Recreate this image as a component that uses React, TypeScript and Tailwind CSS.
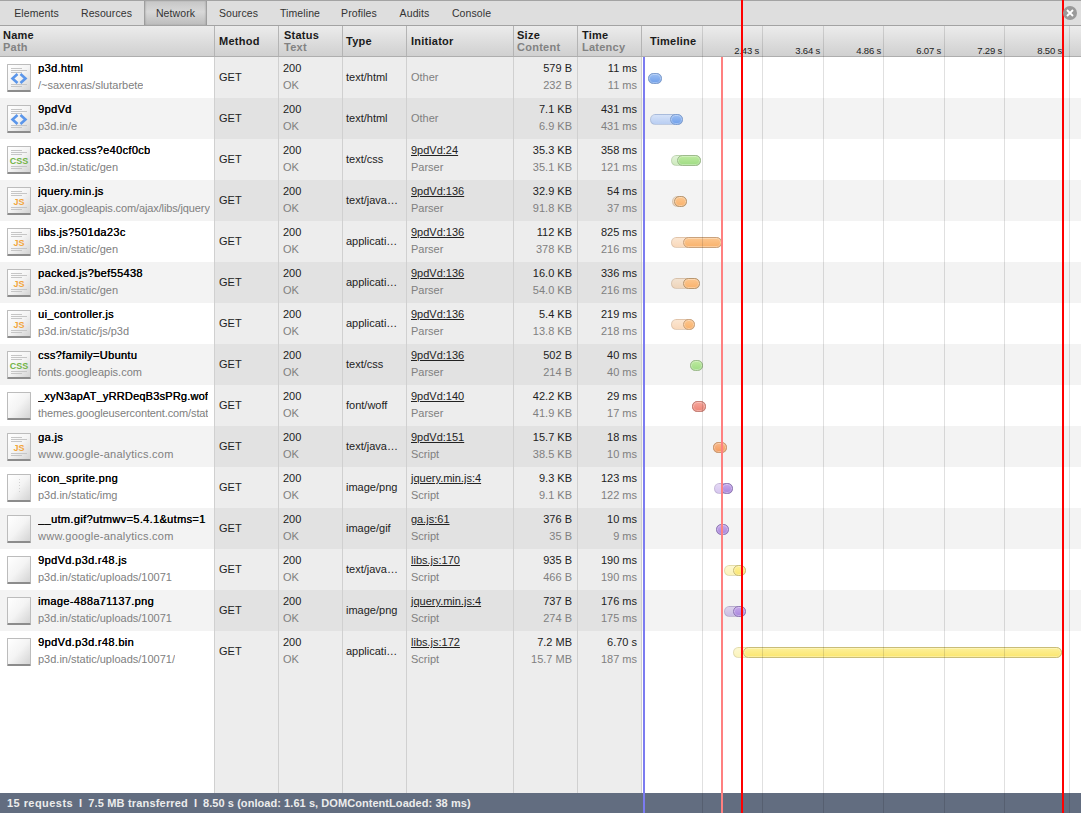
import React from 'react';

type Kind = 'html' | 'css' | 'js' | 'none' | 'dots';
type Bar = { start: number; mid: number; end: number; light: string; solid: string; edge: string };

const blue = { light: 'linear-gradient(#d5e2f8,#b9cef2)', solid: 'linear-gradient(#9dbff3,#6f9fea)', edge: '#7f9fd0' };
const green = { light: 'linear-gradient(#e2f3d8,#cdeabd)', solid: 'linear-gradient(#bdea9f,#9fdc84)', edge: '#9dbb8c' };
const orange = { light: 'linear-gradient(#fbe6d2,#f9d9bb)', solid: 'linear-gradient(#fcc68e,#f9b26c)', edge: '#c9a27c' };
const orangeDull = { light: 'linear-gradient(#f3e2d0,#eed5bb)', solid: 'linear-gradient(#fcc68e,#f9b26c)', edge: '#b8976f' };
const deep = { light: 'linear-gradient(#f7b98a,#f5a76d)', solid: 'linear-gradient(#f9b98a,#f39a5c)', edge: '#c99b75' };
const purple = { light: 'linear-gradient(#e5d9f5,#d6c6ef)', solid: 'linear-gradient(#c6a8ea,#a987dc)', edge: '#8f77b5' };
const purpleDull = { light: 'linear-gradient(#dcd2ec,#c9bde3)', solid: 'linear-gradient(#c6a8ea,#a987dc)', edge: '#8f77b5' };
const yellow = { light: 'linear-gradient(#fdf8d2,#fbf3bb)', solid: 'linear-gradient(#fdf09a,#fbe66f)', edge: '#c9bd78' };
const red = { light: 'linear-gradient(#f7a79c,#f08a7c)', solid: 'linear-gradient(#f7a79c,#ee8577)', edge: '#c4837a' };

const rows: {
  name: string; path: string; kind: Kind; type: string; init: string; cause: string;
  size: string; content: string; time: string; latency: string; bar: Bar;
}[] = [
  { name: 'p3d.html', path: '/~saxenras/slutarbete', kind: 'html', type: 'text/html', init: '', cause: 'Other', size: '579 B', content: '232 B', time: '11 ms', latency: '11 ms', bar: { start: 648, mid: 648, end: 662, ...blue } },
  { name: '9pdVd', path: 'p3d.in/e', kind: 'html', type: 'text/html', init: '', cause: 'Other', size: '7.1 KB', content: '6.9 KB', time: '431 ms', latency: '431 ms', bar: { start: 650, mid: 670, end: 683, ...blue } },
  { name: 'packed.css?e40cf0cb', path: 'p3d.in/static/gen', kind: 'css', type: 'text/css', init: '9pdVd:24', cause: 'Parser', size: '35.3 KB', content: '35.1 KB', time: '358 ms', latency: '121 ms', bar: { start: 671, mid: 677, end: 701, ...green } },
  { name: 'jquery.min.js', path: 'ajax.googleapis.com/ajax/libs/jquery', kind: 'js', type: 'text/java…', init: '9pdVd:136', cause: 'Parser', size: '32.9 KB', content: '91.8 KB', time: '54 ms', latency: '37 ms', bar: { start: 672, mid: 674, end: 687, ...orangeDull } },
  { name: 'libs.js?501da23c', path: 'p3d.in/static/gen', kind: 'js', type: 'applicati…', init: '9pdVd:136', cause: 'Parser', size: '112 KB', content: '378 KB', time: '825 ms', latency: '216 ms', bar: { start: 671, mid: 683, end: 722, ...orange } },
  { name: 'packed.js?bef55438', path: 'p3d.in/static/gen', kind: 'js', type: 'applicati…', init: '9pdVd:136', cause: 'Parser', size: '16.0 KB', content: '54.0 KB', time: '336 ms', latency: '216 ms', bar: { start: 671, mid: 683, end: 700, ...orangeDull } },
  { name: 'ui_controller.js', path: 'p3d.in/static/js/p3d', kind: 'js', type: 'applicati…', init: '9pdVd:136', cause: 'Parser', size: '5.4 KB', content: '13.8 KB', time: '219 ms', latency: '218 ms', bar: { start: 671, mid: 683, end: 695, ...orange } },
  { name: 'css?family=Ubuntu', path: 'fonts.googleapis.com', kind: 'css', type: 'text/css', init: '9pdVd:136', cause: 'Parser', size: '502 B', content: '214 B', time: '40 ms', latency: '40 ms', bar: { start: 690, mid: 690, end: 703, ...green } },
  { name: '_xyN3apAT_yRRDeqB3sPRg.wof', path: 'themes.googleusercontent.com/stat', kind: 'none', type: 'font/woff', init: '9pdVd:140', cause: 'Parser', size: '42.2 KB', content: '41.9 KB', time: '29 ms', latency: '17 ms', bar: { start: 692, mid: 692, end: 706, ...red } },
  { name: 'ga.js', path: 'www.google-analytics.com', kind: 'js', type: 'text/java…', init: '9pdVd:151', cause: 'Script', size: '15.7 KB', content: '38.5 KB', time: '18 ms', latency: '10 ms', bar: { start: 713, mid: 713, end: 727, ...deep } },
  { name: 'icon_sprite.png', path: 'p3d.in/static/img', kind: 'dots', type: 'image/png', init: 'jquery.min.js:4', cause: 'Script', size: '9.3 KB', content: '9.1 KB', time: '123 ms', latency: '122 ms', bar: { start: 714, mid: 721, end: 733, ...purple } },
  { name: '__utm.gif?utmwv=5.4.1&utms=1', path: 'www.google-analytics.com', kind: 'none', type: 'image/gif', init: 'ga.js:61', cause: 'Script', size: '376 B', content: '35 B', time: '10 ms', latency: '9 ms', bar: { start: 716, mid: 716, end: 729, ...purple } },
  { name: '9pdVd.p3d.r48.js', path: 'p3d.in/static/uploads/10071', kind: 'none', type: 'text/java…', init: 'libs.js:170', cause: 'Script', size: '935 B', content: '466 B', time: '190 ms', latency: '190 ms', bar: { start: 724, mid: 733, end: 746, ...yellow } },
  { name: 'image-488a71137.png', path: 'p3d.in/static/uploads/10071', kind: 'none', type: 'image/png', init: 'jquery.min.js:4', cause: 'Script', size: '737 B', content: '274 B', time: '176 ms', latency: '175 ms', bar: { start: 724, mid: 733, end: 746, ...purpleDull } },
  { name: '9pdVd.p3d.r48.bin', path: 'p3d.in/static/uploads/10071/', kind: 'none', type: 'applicati…', init: 'libs.js:172', cause: 'Script', size: '7.2 MB', content: '15.7 MB', time: '6.70 s', latency: '187 ms', bar: { start: 733, mid: 743, end: 1062, ...yellow } },
];

const tabs = [['Elements', 65], ['Resources', 75], ['Network', 63], ['Sources', 63], ['Timeline', 60], ['Profiles', 58], ['Audits', 53], ['Console', 61]] as const;
const gridX = [702, 762, 823, 883, 944, 1004, 1069];
const ticks = [['2.43 s', 759], ['3.64 s', 820], ['4.86 s', 881], ['6.07 s', 941], ['7.29 s', 1002], ['8.50 s', 1062]] as const;
const cols = 'grid grid-cols-[215px_64px_64px_64px_107px_64px_64px_1fr]';
const TIMELINE_X = 642;

const pathTracking = (path: string) => {
  if (path.startsWith('www')) return 'tracking-[0.25px]';
  if (path.startsWith('ajax') || path.startsWith('themes')) return 'tracking-[-0.12px]';
  return '';
};

const FileIcon: React.FC<{ kind: Kind }> = ({ kind }) => (
  <div className="relative w-[24px] h-[28px] shrink-0 rounded-[1px] border border-[#bcbcbc] border-b-2 border-b-[#8c8c8c] bg-gradient-to-br from-white via-[#f4f4f4] to-[#d4d4d4]">
    {(kind === 'html' || kind === 'css' || kind === 'js') && (
      <svg width="22" height="25" viewBox="0 0 22 25" className="absolute left-0 top-0">
        <g stroke="#c6c6c6" strokeWidth="1">
          <path d="M3 3.500h11M3 5.500h16M3 7.500h11" />
          <path d="M3 19.500h16M3 21.500h11" />
        </g>
        {kind === 'html' && (
          <g fill="none" stroke="#5b96ea" strokeWidth="2.600">
            <path d="M9.500 9l-5 4.500 5 4.500" />
            <path d="M12.500 9l5 4.500-5 4.500" />
          </g>
        )}
      </svg>
    )}
    {kind === 'dots' && (
      <svg width="22" height="25" viewBox="0 0 22 25" className="absolute left-0 top-0">
        <path d="M11.500 4v15" stroke="#d2d2d2" strokeWidth="1" strokeDasharray="1 2" />
      </svg>
    )}
    {kind === 'css' && (
      <span className="absolute left-0 right-0 top-[9px] text-center text-[9px] leading-[10px] font-bold text-[#72b447]">CSS</span>
    )}
    {kind === 'js' && (
      <span className="absolute left-0 right-0 top-[9px] text-center text-[9px] leading-[10px] font-bold text-[#f2a53a]">JS</span>
    )}
  </div>
);

const Pill: React.FC<{ bar: Bar }> = ({ bar }) => (
  <>
    <div
      className="absolute top-[16px] h-[11px] rounded-[6px] border"
      style={{ left: bar.start - TIMELINE_X, width: bar.end - bar.start, background: bar.light, borderColor: '#00000018' }}
    />
    <div
      className="absolute top-[16px] h-[11px] rounded-[6px] border shadow-[inset_0_0_0_1px_#ffffff50]"
      style={{ left: bar.mid - TIMELINE_X, width: bar.end - bar.mid, background: bar.solid, borderColor: bar.edge }}
    />
  </>
);

const HeadCell: React.FC<{ top: string; sub?: string; className?: string }> = ({ top, sub, className }) => (
  <div className={`border-r border-[#b4b4b4] flex flex-col justify-center font-bold tracking-[0.25px] leading-[12px] ${className ?? 'px-[4px]'}`}>
    <span className="text-[#1a1a1a]">{top}</span>
    {sub && <span className="text-[#828282]">{sub}</span>}
  </div>
);

export default function App() {
  return (
    <div className="relative h-[813px] w-full overflow-hidden flex flex-col bg-white text-[11px] text-[#222] font-['Liberation_Sans',Arial,sans-serif]">
      {/* Tabs */}
      <div className="h-[26px] shrink-0 flex pl-[4px] bg-[#dedede] border-t border-b border-[#a3a3a3] text-[10.5px] tracking-[0.1px]">
        {tabs.map(([t, w]) => (
          <div
            key={t}
            style={{ width: w }}
            className={`pt-px flex items-center justify-center text-[#333] ${t === 'Network' ? 'bg-[linear-gradient(#c6c6c6,#d8d8d8_45%,#bcbcbc)] shadow-[inset_2px_0_2px_-1px_#8f8f8f,inset_-2px_0_2px_-1px_#8f8f8f]' : ''}`}
          >
            {t}
          </div>
        ))}
      </div>

      {/* Header */}
      <div className={`${cols} h-[31px] shrink-0 border-b border-[#aeaeae] bg-gradient-to-b from-[#ececec] to-[#d0d0d0]`}>
        <HeadCell top="Name" sub="Path" className="pl-[3px]" />
        <HeadCell top="Method" />
        <HeadCell top="Status" sub="Text" className="pl-[5px]" />
        <HeadCell top="Type" className="pl-[3px]" />
        <HeadCell top="Initiator" />
        <HeadCell top="Size" sub="Content" className="pl-[3px]" />
        <HeadCell top="Time" sub="Latency" />
        <div className="relative">
          <span className="absolute left-[8px] top-[9px] font-bold tracking-[0.25px] text-[#1a1a1a] leading-[12px]">Timeline</span>
          {ticks.map(([t, x]) => (
            <span
              key={t}
              className="absolute top-[19px] leading-[11px] text-[9.5px] tracking-[-0.2px] text-[#222] text-right"
              style={{ right: 1081 - x }}
            >
              {t}
            </span>
          ))}
        </div>
      </div>

      {/* Rows */}
      {rows.map((r, i) => {
        const even = i % 2 === 1;
        const cell = even ? 'bg-[#e2e2e2]' : 'bg-[#ededed]';
        const base = even ? 'bg-[#f3f3f3]' : 'bg-white';
        return (
          <div key={r.name} className={`${cols} h-[41px] shrink-0 ${base}`}>
            <div className="flex items-center gap-[7px] pl-[7px] pr-[4px] border-r border-[#d0d0d0] overflow-hidden">
              <FileIcon kind={r.kind} />
              <div className="min-w-0 flex flex-col gap-[5px] leading-[12px] -mt-[2px]">
                <span className={`whitespace-nowrap overflow-hidden text-black [text-shadow:0.3px_0_0_#000] ${r.name.startsWith('_xy') ? 'tracking-[0.2px]' : 'tracking-[0.35px]'}`}>{r.name}</span>
                <span className={`whitespace-nowrap overflow-hidden text-[#808080] ${pathTracking(r.path)}`}>{r.path}</span>
              </div>
            </div>
            <div className={`${cell} border-r border-[#d0d0d0] px-[4px] flex items-center`}>GET</div>
            <div className={`${cell} border-r border-[#d0d0d0] px-[4px] flex flex-col justify-center gap-[5px] leading-[12px]`}>
              <span className="-translate-y-px">200</span>
              <span className="-translate-y-px text-[#808080]">OK</span>
            </div>
            <div className={`${cell} border-r border-[#d0d0d0] pl-[3px] flex items-center whitespace-nowrap overflow-hidden`}>{r.type}</div>
            <div className={`${cell} border-r border-[#d0d0d0] px-[4px] flex flex-col justify-center gap-[5px] leading-[12px]`}>
              {r.init && <span className="-translate-y-px underline">{r.init}</span>}
              <span className="-translate-y-px text-[#808080]">{r.cause}</span>
            </div>
            <div className={`${cell} border-r border-[#d0d0d0] pr-[5px] flex flex-col justify-center items-end gap-[5px] leading-[12px]`}>
              <span className="-translate-y-px">{r.size}</span>
              <span className="-translate-y-px text-[#808080]">{r.content}</span>
            </div>
            <div className={`${cell} border-r border-[#d0d0d0] px-[4px] flex flex-col justify-center items-end gap-[5px] leading-[12px]`}>
              <span className="-translate-y-px">{r.time}</span>
              <span className="-translate-y-px text-[#808080]">{r.latency}</span>
            </div>
            <div className="relative">
              <Pill bar={r.bar} />
            </div>
          </div>
        );
      })}

      {/* Empty space under the rows */}
      <div className={`${cols} flex-1`}>
        <div className="border-r border-[#d0d0d0]" />
        {[0, 1, 2, 3, 4, 5].map(n => (
          <div key={n} className="bg-[#ededed] border-r border-[#d0d0d0]" />
        ))}
        <div />
      </div>

      {/* Status bar */}
      <div className="h-[20px] shrink-0 bg-[#626d80] pl-[7px] flex items-center gap-[6px] font-bold text-[#ececec] whitespace-nowrap">
        <span className="tracking-[0.45px]">15 requests</span>
        <span>I</span>
        <span className="tracking-[0.18px]">7.5 MB transferred</span>
        <span>I</span>
        <span className="tracking-[0.06px]">8.50 s (onload: 1.61 s, DOMContentLoaded: 38 ms)</span>
      </div>

      {/* Waterfall grid and load markers */}
      {gridX.map(x => (
        <div key={x} className="absolute top-[26px] bottom-0 w-px bg-[#0000001f]" style={{ left: x }} />
      ))}
      <div className="absolute top-[57px] bottom-0 left-[643px] w-[2px] bg-[#7b7bf0]" />
      <div className="absolute top-[57px] bottom-0 left-[721px] w-[2px] bg-[#ff8080]" />
      <div className="absolute top-0 bottom-0 left-[741px] w-[2px] bg-[#ff0000]" />
      <div className="absolute top-0 bottom-0 left-[1062px] w-[2px] bg-[#ff0000]" />

      {/* Close button */}
      <div className="absolute left-[1063px] top-[6px] w-[14px] h-[14px] rounded-full bg-[#9a9a9a] flex items-center justify-center">
        <svg width="8" height="8" viewBox="0 0 8 8">
          <path d="M1 1l6 6M7 1l-6 6" stroke="#fff" strokeWidth="1.800" />
        </svg>
      </div>
    </div>
  );
}
